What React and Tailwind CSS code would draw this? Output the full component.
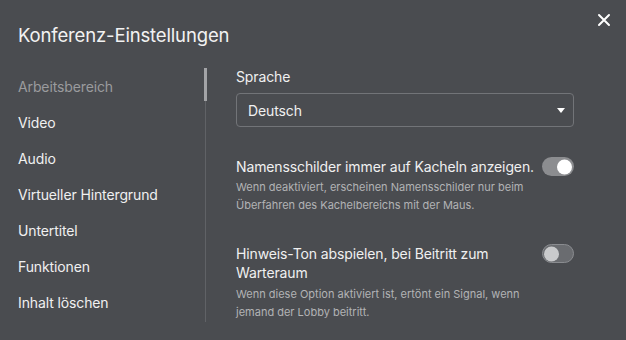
import { useState } from 'react'

const navItems = [
  'Arbeitsbereich',
  'Video',
  'Audio',
  'Virtueller Hintergrund',
  'Untertitel',
  'Funktionen',
  'Inhalt löschen',
]

function Toggle({ on }) {
  return (
    <div
      className={`relative w-[32px] h-[19px] rounded-full shrink-0 ${on ? 'bg-[#8c8d90]' : 'bg-[#6a6c70] border border-[#8a8c90]'}`}
    >
      <div
        className={`absolute top-1/2 -translate-y-1/2 w-[15px] h-[15px] rounded-full ${on ? 'right-[2px] bg-white' : 'left-[1px] bg-[#c9cacc]'}`}
      />
    </div>
  )
}

export default function App() {
  const [active] = useState(0)

  return (
    <div className="w-[626px] h-[340px] bg-[#4a4c50] text-white overflow-hidden relative" style={{ fontFamily: 'Inter, "Noto Sans", sans-serif' }}>
      <button className="absolute right-[15px] top-[13px] w-[14px] h-[14px]">
        <svg viewBox="0 0 14 14" width="14" height="14">
          <path d="M2 2 L12 12 M12 2 L2 12" stroke="white" strokeWidth="2" strokeLinecap="round" />
        </svg>
      </button>

      <div className="px-[18px] pt-[23px]">
        <h1 className="text-[18.5px] leading-[24px] font-normal tracking-[-0.15px] text-[#f2f2f2]">Konferenz-Einstellungen</h1>
      </div>

      <div className="flex mt-[21px]">
        {/* Sidebar */}
        <div className="w-[206px] pl-[18px] border-r border-[#606266] relative h-[254px]">
          <div className="absolute right-[-2px] top-0 w-[3px] h-[33px] bg-[#a3a4a7]" />
          {navItems.map((item, idx) => (
            <div
              key={item}
              className={`h-9 flex items-center text-[14px] tracking-[-0.12px] ${idx === active ? 'text-[#9a9b9e]' : 'text-[#f0f0f0]'}`}
            >
              {item}
            </div>
          ))}
        </div>

        {/* Content */}
        <div className="pl-[30px] w-[368px] tracking-[-0.12px]">
          <div className="text-[14px] leading-[18px] text-[#f0f0f0]">Sprache</div>
          <div className="mt-[7px] h-[34px] border border-[#727478] rounded-[4px] flex items-center justify-between pl-[11px] pr-[8px]">
            <span className="text-[14px] text-[#f0f0f0]">Deutsch</span>
            <svg viewBox="0 0 8 5" width="8" height="5">
              <path d="M0 0 L8 0 L4 5 Z" fill="white" />
            </svg>
          </div>

          <div className="mt-[30px]">
            <div className="flex justify-between items-start">
              <div className="text-[14px] leading-[19px] text-[#f0f0f0]">Namensschilder immer auf Kacheln anzeigen.</div>
              <Toggle on />
            </div>
            <div className="mt-[2px] text-[11px] leading-[18px] tracking-normal text-[#b2b3b5] pr-[50px]">
              Wenn deaktiviert, erscheinen Namensschilder nur beim Überfahren des Kachelbereichs mit der Maus.
            </div>
          </div>

          <div className="mt-[30px]">
            <div className="flex justify-between items-start">
              <div className="text-[14px] leading-[19px] text-[#f0f0f0] w-[280px]">Hinweis-Ton abspielen, bei Beitritt zum Warteraum</div>
              <Toggle on={false} />
            </div>
            <div className="mt-[3px] text-[11px] leading-[18px] tracking-normal text-[#b2b3b5] pr-[50px]">
              Wenn diese Option aktiviert ist, ertönt ein Signal, wenn jemand der Lobby beitritt.
            </div>
          </div>
        </div>
      </div>
    </div>
  )
}
